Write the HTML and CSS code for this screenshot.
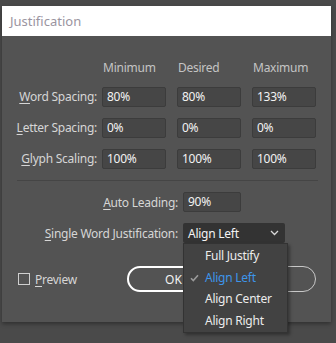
FILE: index.html
```html
<!DOCTYPE html>
<html lang="en">
<head>
    <meta charset="UTF-8">
    <title>Justification</title>
    <link rel="stylesheet" href="styles.css">
</head>
<body>
    <div class="dialog">
        <div class="titlebar">Justification</div>
        <div class="content">
            <div class="spacing-grid">
                <span></span>
                <span class="col-head">Minimum</span>
                <span class="col-head">Desired</span>
                <span class="col-head">Maximum</span>

                <label class="field-label"><u>W</u>ord Spacing:</label>
                <div class="field">80%</div>
                <div class="field">80%</div>
                <div class="field">133%</div>

                <label class="field-label"><u>L</u>etter Spacing:</label>
                <div class="field">0%</div>
                <div class="field">0%</div>
                <div class="field">0%</div>

                <label class="field-label"><u>G</u>lyph Scaling:</label>
                <div class="field">100%</div>
                <div class="field">100%</div>
                <div class="field">100%</div>
            </div>

            <hr class="divider">

            <div class="form-row">
                <label class="row-label"><u>A</u>uto Leading:</label>
                <div class="field field-short">90%</div>
            </div>
            <div class="form-row">
                <label class="row-label"><u>S</u>ingle Word Justification:</label>
                <div class="select">
                    <span>Align Left</span>
                    <svg width="9" height="6" viewBox="0 0 9 6"><polyline points="1,1 4.5,4.5 8,1" fill="none" stroke="#d8d8d8" stroke-width="1.3"/></svg>
                </div>
            </div>

            <div class="actions">
                <label class="preview"><span class="checkbox"></span><span><u>P</u>review</span></label>
                <div class="buttons">
                    <button class="btn btn-primary">OK</button>
                    <button class="btn btn-cancel">Cancel</button>
                </div>
            </div>
        </div>
    </div>

    <ul class="menu">
        <li>Full Justify</li>
        <li class="selected"><svg class="check" width="9" height="8" viewBox="0 0 9 8"><polyline points="1,4.2 3.3,6.5 8,1.2" fill="none" stroke="#9a9a9a" stroke-width="1.6"/></svg>Align Left</li>
        <li>Align Center</li>
        <li>Align Right</li>
    </ul>
</body>
</html>
```

FILE: styles.css
```css
body {
    margin: 0;
    background-color: #4a4a4a;
    font-family: 'Noto Sans', 'Open Sans', sans-serif;
    font-size: 12px;
    letter-spacing: -0.25px;
    color: #d6d6d6;
    height: 343px;
    overflow: hidden;
}
u {
    text-decoration-thickness: 1px;
    text-underline-offset: 2px;
}
.dialog {
    margin: 6px 5px 0 2px;
    background-color: #535353;
    box-shadow: 0 2px 4px rgba(0, 0, 0, 0.35);
}
.titlebar {
    background-color: #fff;
    height: 30px;
    line-height: 30px;
    padding-left: 8px;
    font-size: 13px;
    color: #9a94a0;
    letter-spacing: 0;
}
.content {
    padding: 24px 0 30px 0;
}
.spacing-grid {
    display: grid;
    grid-template-columns: 89px 64px 64px 64px;
    column-gap: 11px;
    row-gap: 11px;
    grid-template-rows: 16px 20px 20px 20px;
}
.spacing-grid .col-head {
    padding-left: 1px;
    line-height: 16px;
    color: #c4c4c4;
}
.field-label {
    text-align: right;
    margin-right: -6px;
    line-height: 20px;
    white-space: nowrap;
}
.field {
    box-sizing: border-box;
    height: 20px;
    line-height: 18px;
    padding-left: 4px;
    background-color: #464646;
    border: 1px solid #3c3c3c;
    border-radius: 2px;
    color: #f2f2f2;
}
.divider {
    border: 0;
    border-top: 1px solid #454545;
    margin: 11px 13px 0 15px;
}
.form-row {
    display: flex;
    align-items: center;
    margin-top: 11px;
}
.row-label {
    width: 176px;
    text-align: right;
    padding-right: 5px;
}
.field-short {
    width: 58px;
}
.select {
    box-sizing: border-box;
    width: 102px;
    height: 20px;
    display: flex;
    align-items: center;
    justify-content: space-between;
    padding: 0 6px 0 5px;
    background-color: #333;
    border-radius: 2px;
    color: #f4f4f4;
}
.actions {
    display: flex;
    align-items: center;
    margin-top: 23px;
    padding-left: 16px;
}
.preview {
    display: flex;
    align-items: center;
    gap: 5px;
    width: 109px;
}
.checkbox {
    box-sizing: border-box;
    width: 12px;
    height: 12px;
    border: 1px solid #cfcfcf;
}
.buttons {
    display: flex;
    gap: 8px;
}
.btn {
    box-sizing: border-box;
    height: 26px;
    border-radius: 13px;
    background: transparent;
    border: 1px solid #c8c8c8;
    color: #f2f2f2;
    font-family: inherit;
    font-size: 12px;
    width: 88px;
}
.btn-primary {
    border: 2px solid #fff;
    width: 93px;
}
.btn-cancel {
    padding-right: 18px;
}
.menu {
    position: absolute;
    left: 183px;
    top: 243px;
    width: 105px;
    box-sizing: border-box;
    margin: 0;
    padding: 1px 0 1px 0;
    list-style: none;
    background-color: #424242;
    border: 1px solid #333;
    box-shadow: 2px 2px 3px rgba(0, 0, 0, 0.35);
}
.menu li {
    position: relative;
    height: 21.5px;
    line-height: 21.5px;
    padding-left: 21px;
    color: #ececec;
}
.menu li.selected {
    color: #3d95ea;
}
.check {
    position: absolute;
    left: 6px;
    top: 7px;
}
```
